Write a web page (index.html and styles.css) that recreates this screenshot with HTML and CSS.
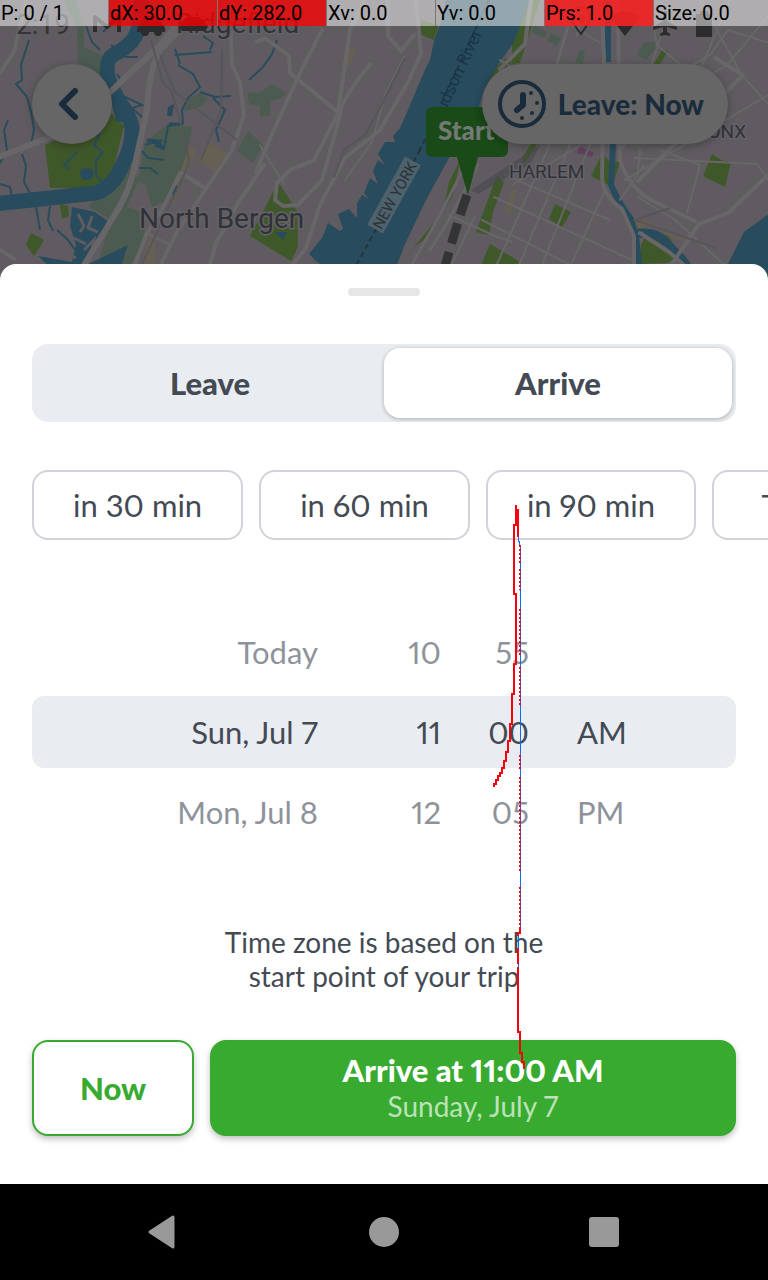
FILE: index.html
```html
<!DOCTYPE html>
<html lang="en">
<head>
<meta charset="utf-8">
<meta name="viewport" content="width=device-width, initial-scale=1">
<title>Choose arrival time</title>
<link rel="stylesheet" href="styles.css">
</head>
<body>
<header class="map-header">
  <svg class="map" viewBox="0 0 768 280" preserveAspectRatio="xMidYMin slice" aria-hidden="true">
    <rect width="768" height="280" fill="#5f5b60"/>
    <!-- wetlands and parks -->
    <g fill="#4b5b50">
      <path d="M63 0L76 0L84 28L84 47L101 55L101 75L78 63L77 29Z"/>
      <path d="M168 124L192 127L186 160L166 200L152 208L146 185L138 181L145 142Z"/>
      <path d="M188 100L200 93L208 98L202 106L184 111Z"/>
      <path d="M256 95L272 84L286 93L281 98L270 101V116H260V106L249 104V97Z"/>
      <path d="M248 131L263 145L253 163L237 151ZM248 92L257 93V101H248Z"/>
      <path d="M88 206L130 165L139 180L127 207L148 215L142 245L122 280L98 264L111 220Z"/>
      <path d="M310 254L319 241L325 248L317 264ZM534 25L547 32L544 38L532 32ZM551 33L561 38L557 46L548 41ZM580 50L585 52L583 64L575 63ZM643 43L656 42L655 50L646 60L637 55Z"/>
    </g>
    <g fill="#3f5829">
      <path d="M45 145L112 114L124 126L110 182L100 188H50Z"/>
      <path d="M60 204L68 206L69 216L62 219ZM31 233L44 240L34 256L26 245ZM278 182L297 211L298 247L291 261L250 236L266 206Z"/>
      <path d="M421 20L439 25L434 40L419 34ZM468 0L490 0L480 20ZM512 36L528 0H540L520 63L512 64ZM485 80L505 58L512 62L484 108ZM443 212L449 182L460 160L453 195L430 235L413 248L400 264Z"/>
      <path d="M497 175L504 182L493 212L489 235L476 232ZM490 244L520 262L512 280H475ZM555 204L571 212L562 227L549 219ZM602 154L610 161L620 162L612 187L591 176ZM537 144L525 163L522 158L531 144ZM662 50L668 51L660 64H654Z" />
      <path d="M712 154L723 161L731 162L725 187L703 176Z"/>
      <path d="M648 232L668 236L682 256L666 263L640 264L641 245Z"/>
    </g>
    <g fill="#656052">
      <path d="M210 143L228 154L215 171L197 160ZM190 145L196 151L183 181L173 205L170 198ZM150 234L155 237L156 268H140ZM350 48H356L350 66H342Z"/>
      <path d="M633 216L648 221L690 242L674 239L652 226L637 229ZM512 190H517L510 215L504 211Z"/>
    </g>
    <path d="M579 146L594 153L592 157L577 153Z" fill="#62415f"/>
    <!-- water -->
    <g fill="#284c5d">
      <path d="M446 0H530L514 42L498 65L484 90L478 110L449 158L425 202L405 244L395 270L320 264L309 254L322 238L328 223L340 231L343 229L338 214L349 209L357 218V203L362 195L369 199L364 193L370 178L378 184L373 171L378 160L385 165L378 154L385 142H395L393 136L400 128L408 110L424 72L430 60L434 41L440 25Z"/>
      <path d="M770 213L744 232L729 262L720 280H770Z"/>
      <path d="M72 207L95 212L109 222L98 242L80 268L128 245L118 275H58L38 256L72 262L76 245L70 226Z"/>
      <path d="M86 168L92 178L82 180ZM168 107L174 104L172 116L167 116ZM275 232L287 232L283 240ZM171 190L176 184L178 189L173 196ZM112 104L123 100L132 124L116 121Z"/>
      <ellipse cx="87" cy="174" rx="7" ry="6"/>
    </g>
    <g fill="none" stroke="#284c5d">
      <path stroke-width="15" d="M-6 204L50 198L96 193Q113 187 122 166Q133 145 132 128Q130 115 118 100L108 78Q105 60 113 55Q137 43 139 25L142 0"/>
      <path stroke-width="6" d="M608 0V62M613 144L611 185Q619 204 631 219L636 237L641 280"/>
      <path stroke-width="9" d="M634 234Q656 230 665 242L680 257L690 270"/>
      <path stroke-width="2" d="M145 145L162 140L156 146L164 149L168 126L180 124M178 65L193 74L200 87L188 98L182 110L183 124M200 92L215 97L231 96M213 98L225 110L216 130L219 142M139 168H150L158 174M142 151L148 158L164 160M175 55L212 52M249 80L263 67L272 54L277 40M111 45L126 57H138M86 26L92 42L100 50M29 40L21 65L22 80L16 84L27 97L31 112L34 129L31 145M8 120L4 130L7 150L0 163M22 154L26 166L24 182L31 195M0 184L10 187L12 198M103 32L116 19L122 12M77 152L64 165L70 169M103 126L94 146L103 152L96 160V175L105 187M203 36L213 43L210 50M123 96L142 105L132 108L143 118M36 207L40 230M50 206L48 220L53 231M57 230L68 240L80 257M175 49L180 64M117 74L122 82"/>
      <path stroke-width="3" d="M147 140L157 141L164 149L157 143ZM169 124H183"/>
    </g>
    <!-- marsh islets -->
    <path d="M78 214L84 226L80 232M92 216L88 228L98 232M62 252L76 258M84 250L94 240L90 262M74 238L86 244" stroke="#5f5b60" stroke-width="3" fill="none"/>
    <!-- roads -->
    <g fill="none" stroke="#686668" stroke-linejoin="round" stroke-linecap="round">
      <path stroke-width="6" d="M-4 158L50 137L106 96L160 45L190 10M190 20L160 50Q149 70 147 110L137 155Q132 188 114 216L78 275"/>
      <path stroke-width="4" d="M26 0L14 52L0 73M0 250L14 259M231 32L232 65L240 82L244 115L232 150L178 230L158 270M181 173L205 188M180 173L165 204L147 233L135 264M209 268L216 243L240 200L264 165M322 30L298 77L269 141L256 172M256 42L265 38L289 56L290 73L338 112L350 30L365 0M388 0V36L401 51L414 35M370 64L356 82L346 98L314 160L290 170L277 183L275 200L283 206L298 205L322 180L341 112M416 0L421 53L408 82L380 130L345 158L320 205L306 248L285 275"/>
      <path stroke-width="4" d="M531 0L525 44L500 69M602 10L604 60L602 176Q602 195 622 209L634 236V280M618 0L620 160Q629 190 657 203L695 221M661 280L699 224L728 213L769 174M638 181L743 75L715 58M640 233L669 252L685 266"/>
      <path stroke-width="2" d="M638 170L640 150M635 158L757 164L768 180M700 0L742 75L769 105M648 0L657 45L686 69L710 55L728 30L769 43M475 216L452 264M449 215L495 236L512 242"/>
      <path stroke-width="2" d="M260 145L284 184M345 180L372 142L385 95L404 57M500 60L582 110M553 15L604 45M670 10L623 148M730 0L700 70M769 15L727 65L694 84M625 180L768 95M638 197L675 220L728 268M550 144L490 280M570 145L516 272M590 144L540 270M605 190L564 280M505 175L610 220M494 197L632 260M482 220L600 280M660 150L700 165M700 165L687 213M644 165L620 200M580 146L512 185M148 234L171 245"/>
      <path stroke-width="3" d="M468 160L440 215L412 264M478 165L446 225L430 250M570 20L552 80M586 0L577 35"/>
    </g>
    <g fill="none" stroke="#57555a" stroke-width="2">
      <path d="M151 40L163 83L171 90L184 135L189 160L185 173L141 266M160 55L171 83L175 92L237 140M222 50L221 110L201 160M405 58L383 102L366 134L344 150L334 177M670 208L635 220L716 248"/>
    </g>
    <path d="M489 0L420 150M420 150L348 280" stroke="#23343e" stroke-width="2" stroke-dasharray="5 4" fill="none"/>
    <path d="M471 190L540 145L530 164L478 194Z" fill="#4a484d" opacity=".6"/>
    <!-- place labels -->
    <g class="map-label">
      <text x="176" y="33" font-size="28">Ridgefield</text>
      <text x="139" y="228" font-size="28">North Bergen</text>
      <text x="509" y="178" font-size="19">HARLEM</text>
      <text x="684" y="138" font-size="19">BRONX</text>
    </g>
    <text class="river-label" font-size="17" transform="translate(440 124) rotate(-65)">Hudson River</text>
    <g transform="translate(394 195) rotate(-61)">
      <rect x="-39" y="-9" width="78" height="18" fill="#4d626c"/>
      <text class="state-label" font-size="15" y="6" text-anchor="middle">NEW YORK</text>
    </g>
    <!-- route and start pin -->
    <path d="M467 195Q456 226 444 270" stroke="#343335" stroke-width="9" stroke-dasharray="21 9" fill="none"/>
    <path d="M433 107H501Q508 107 508 114V150Q508 157 501 157H478L468 195L457 157H433Q426 157 426 150V114Q426 107 433 107Z" fill="#194a17"/>
    <text class="pin-label" x="438" y="140" font-size="26">Start</text>
  </svg>

  <div class="status-bar">
    <span class="clock">2:19</span>
    <svg class="status-left" viewBox="90 0 120 40" aria-hidden="true">
      <path d="M95 32V17L107 27L119 17V32" fill="none" stroke="#2c2b2d" stroke-width="4" stroke-linejoin="round"/>
      <path d="M137 27Q140 26 142 20Q144 16 148 16H157Q160 20 163 25Q166 27 165 32H162A4 4 0 0 1 154 32H149A4 4 0 0 1 141 32H137ZM180 27Q182 20 188 17H198Q204 20 208 27L205 31H182Z" fill="#2c2b2d"/>
    </svg>
    <svg class="status-right" viewBox="570 0 150 40" aria-hidden="true">
      <path d="M581 34Q571 22 572 16A9 9 0 0 1 590 16Q590 22 581 34Z" fill="none" stroke="#2c2b2d" stroke-width="2"/>
      <circle cx="581" cy="19" r="3" fill="none" stroke="#2c2b2d" stroke-width="2"/>
      <path d="M610 17Q625 6 640 17L625 36Z" fill="#2c2b2d"/>
      <path d="M663 12Q665 10 667 12V21L677 27V30L667 27V32L670 34V36L665 35L660 36V34L663 32V27L653 30V27L663 21Z" fill="#2c2b2d"/>
      <path d="M696 14H700V11H708V14H712V36Q712 37 711 37H697Q696 37 696 36Z" fill="#2c2b2d"/>
    </svg>
  </div>

  <div class="debug-bar">
    <span class="debug-cell">P: 0 / 1</span>
    <span class="debug-cell moved">dX: 30.0</span>
    <span class="debug-cell moved">dY: 282.0</span>
    <span class="debug-cell">Xv: 0.0</span>
    <span class="debug-cell">Yv: 0.0</span>
    <span class="debug-cell pressed">Prs: 1.0</span>
    <span class="debug-cell">Size: 0.0</span>
  </div>

  <div class="map-tools">
    <button class="back" type="button" aria-label="Back">
      <svg width="80" height="80" viewBox="0 0 80 80" aria-hidden="true"><path d="M42 27L29 40L42 53" transform="translate(4 4) translate(-3 -4)" fill="none" stroke="#1a2c3c" stroke-width="6" stroke-linecap="round" stroke-linejoin="round"/></svg>
    </button>
    <button class="leave-pill" type="button">
      <svg width="48" height="48" viewBox="0 0 48 48" aria-hidden="true">
        <circle cx="24" cy="24" r="22" fill="none" stroke="#1a2c3c" stroke-width="4"/>
        <path d="M25 15V25L19 30" fill="none" stroke="#1a2c3c" stroke-width="6" stroke-linecap="round" stroke-linejoin="round"/>
        <g fill="#1a2c3c"><circle cx="33" cy="13" r="2"/><circle cx="39" cy="23" r="2"/><circle cx="34" cy="33" r="2"/><circle cx="24" cy="38" r="2"/></g>
      </svg>
      <span>Leave: Now</span>
    </button>
  </div>
</header>

<main class="sheet">
  <div class="handle"></div>

  <div class="segment" role="tablist">
    <button class="segment-tab" type="button" role="tab" aria-selected="false">Leave</button>
    <button class="segment-tab active" type="button" role="tab" aria-selected="true">Arrive</button>
  </div>

  <div class="chips">
    <button class="chip" type="button">in 30 min</button>
    <button class="chip" type="button">in 60 min</button>
    <button class="chip" type="button">in 90 min</button>
    <button class="chip" type="button">Tonight</button>
  </div>

  <div class="picker">
    <div class="picker-row"><span>Today</span><span>10</span><span>55</span><span class="period"></span></div>
    <div class="picker-row selected"><span>Sun, Jul 7</span><span>11</span><span>00</span><span class="period">AM</span></div>
    <div class="picker-row"><span>Mon, Jul 8</span><span>12</span><span>05</span><span class="period">PM</span></div>
  </div>

  <p class="note">Time zone is based on the<br>start point of your trip</p>

  <div class="actions">
    <button class="now" type="button">Now</button>
    <button class="confirm" type="button"><strong>Arrive at 11:00 AM</strong><span>Sunday, July 7</span></button>
  </div>
</main>

<nav class="system-nav">
  <button type="button" aria-label="System back"><svg width="32" height="36" viewBox="3 0 32 36" aria-hidden="true"><path d="M28 3V33L5 18Z" fill="#999" stroke="#999" stroke-width="3" stroke-linejoin="round"/></svg></button>
  <button type="button" aria-label="Home"><svg width="32" height="36" viewBox="0 0 32 36" aria-hidden="true"><circle cx="16" cy="18" r="15" fill="#999"/></svg></button>
  <button type="button" aria-label="Recent apps"><svg width="32" height="36" viewBox="0 0 32 36" aria-hidden="true"><rect x="1" y="3" width="30" height="30" rx="3" fill="#999"/></svg></button>
</nav>

<svg class="touch-trace" viewBox="0 0 768 1280" preserveAspectRatio="xMidYMin meet" aria-hidden="true" shape-rendering="crispEdges">
  <g fill="none" stroke-width="1" stroke="#0a6cff">
    <path d="M518.5 537V541H519.5V545H520.5V932M518.5 932V948M518.5 964V968"/>
  </g>
  <g fill="none" stroke-width="2" stroke="#f5000c">
    <path d="M516 505V525H514V594H516V664H514V694H512V724H510V741H508V752H506V761H504V768H502V773H500V776H498V780H496V784H494V787M518 509V537"/>
    <path d="M520 545V563M520 569V590M520 609V655M520 667V705M520 755V771M520 777V873M520 887V927" stroke-dasharray="2 2"/>
    <path d="M520 927V933H518V936M518 948V964M518 967V1032H520V1053H522V1062H524V1069"/>
  </g>
</svg>
</body>
</html>
```

FILE: styles.css
```css
* {
  box-sizing: border-box;
}

body {
  position: relative;
  display: flex;
  flex-direction: column;
  min-height: 100vh;
  margin: 0;
  overflow-x: hidden;
  background: #000;
  color: #434a54;
  font-family: Lato, "Open Sans", sans-serif;
  font-size: 31px;
  font-variant-numeric: proportional-nums;
}

button {
  margin: 0;
  padding: 0;
  border: 0;
  background: none;
  color: inherit;
  font: inherit;
}

svg {
  display: block;
}

.map-header {
  position: relative;
  height: 280px;
  overflow: hidden;
  background: #5f5b60;
}

.map {
  position: absolute;
  inset: 0;
  width: 100%;
  height: 100%;
}

.map-label,
.state-label,
.river-label {
  font-family: Roboto, sans-serif;
}

.map-label {
  fill: #303238;
  stroke: #656268;
  stroke-width: 3px;
  paint-order: stroke;
}

.river-label {
  fill: #17364a;
}

.state-label {
  fill: #2b3137;
}

.pin-label {
  fill: #757975;
  font-family: Lato, sans-serif;
  font-weight: 900;
}

.status-bar {
  position: absolute;
  inset: 0 0 auto;
  display: flex;
  align-items: flex-start;
  height: 48px;
  padding: 0 48px 0 16px;
}

.clock {
  width: 74px;
  padding-top: 8px;
  color: #343336;
  font: 28px/34px Roboto, sans-serif;
}

.status-left {
  width: 120px;
  height: 40px;
}

.status-right {
  width: 150px;
  height: 40px;
  margin-left: auto;
}

.debug-bar {
  position: relative;
  display: flex;
  height: 26px;
  color: #000;
  font: 20px/26px Roboto, sans-serif;
}

.debug-cell {
  flex: 0 0 109px;
  padding-left: 1px;
  background: rgba(255, 255, 255, 0.5);
  white-space: nowrap;
}

.debug-cell:last-child {
  flex: 1;
}

.debug-cell:not(:last-child) {
  border-right: 1px solid #777;
}

.debug-cell.moved {
  background: rgba(255, 0, 0, 0.76);
}

.debug-cell.pressed {
  background: rgba(246, 36, 36, 0.9);
}

.map-tools {
  position: relative;
  display: flex;
  justify-content: space-between;
  padding: 38px 40px 0 32px;
}

.back,
.leave-pill {
  height: 80px;
  border-radius: 40px;
  background: #666;
  box-shadow: 0 2px 8px rgba(0, 0, 0, 0.3);
}

.back {
  width: 80px;
}

.leave-pill {
  display: flex;
  align-items: center;
  gap: 12px;
  padding: 0 24px 0 16px;
  color: #1a2c3c;
  font-size: 28px;
  font-weight: 900;
  white-space: nowrap;
}

.sheet {
  position: relative;
  flex: 1;
  margin-top: -16px;
  padding: 24px 32px 48px;
  border-radius: 16px 16px 0 0;
  background: #fff;
}

.handle {
  width: 72px;
  height: 8px;
  margin: 0 auto 48px;
  border-radius: 4px;
  background: #e6e6e6;
}

.segment {
  display: grid;
  grid-template-columns: 1fr 1fr;
  height: 78px;
  padding: 4px;
  border-radius: 16px;
  background: #e9ecf1;
}

.segment-tab {
  border-radius: 16px;
  font-weight: 900;
}

.segment-tab.active {
  background: #fff;
  box-shadow: 0 1px 4px rgba(0, 0, 0, 0.28);
}

.chips {
  display: flex;
  gap: 16px;
  margin: 48px -32px 0 0;
  overflow: hidden;
}

.chip {
  flex: none;
  min-width: 200px;
  height: 70px;
  padding: 0 39px;
  border: 2px solid #d0d3da;
  border-radius: 16px;
}

.picker {
  display: grid;
  gap: 8px;
  margin-top: 76px;
}

.picker-row {
  display: grid;
  grid-template-columns: 286fr 123fr 88fr 207fr;
  align-items: center;
  height: 72px;
  border-radius: 12px;
  color: #8e939b;
  text-align: right;
}

.picker-row.selected {
  background: #e9ecf1;
  color: #434a54;
}

.period {
  padding-left: 48px;
  text-align: left;
}

.note {
  margin: 77px 0 47px;
  font-size: 28px;
  line-height: 34px;
  text-align: center;
}

.actions {
  display: flex;
  gap: 16px;
}

.now,
.confirm {
  height: 96px;
  border-radius: 16px;
  box-shadow: 0 3px 6px rgba(0, 0, 0, 0.25);
}

.now {
  width: 162px;
  border: 2px solid #38aa30;
  background: #fff;
  color: #38aa30;
  font-weight: 900;
}

.confirm {
  display: flex;
  flex: 1;
  flex-direction: column;
  align-items: center;
  justify-content: center;
  background: #38aa30;
  color: #fff;
  line-height: 36px;
}

.confirm strong {
  font-weight: 900;
}

.confirm span {
  color: #bde2b9;
  font-size: 28px;
}

.system-nav {
  display: flex;
  align-items: center;
  justify-content: center;
  gap: 188px;
  height: 96px;
  background: #000;
}

.touch-trace {
  position: absolute;
  inset: 0 0 auto;
  width: 100%;
  pointer-events: none;
}
```
